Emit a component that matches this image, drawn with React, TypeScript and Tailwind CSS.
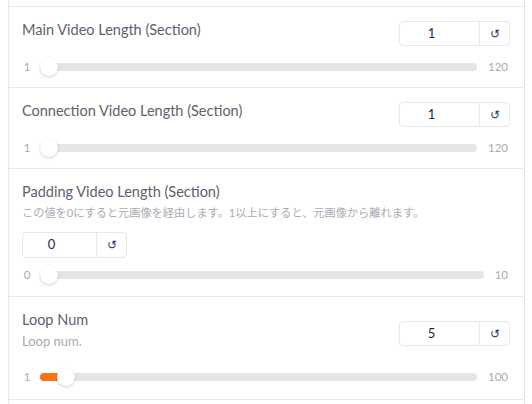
import { useState } from "react";

type SliderField = {
  label: string;
  info?: string;
  cjk?: boolean;
  value: number;
  min: number;
  max: number;
  inputLeft?: boolean;
  pb: string;
};

const fields: SliderField[] = [
  { label: "Main Video Length (Section)", value: 1, min: 1, max: 120, pb: "pb-[11px]" },
  { label: "Connection Video Length (Section)", value: 1, min: 1, max: 120, pb: "pb-[11px]" },
  {
    label: "Padding Video Length (Section)",
    info: "この値を0にすると元画像を経由します。1以上にすると、元画像から離れます。",
    cjk: true,
    value: 0,
    min: 0,
    max: 10,
    inputLeft: true,
    pb: "pb-[12px]",
  },
  { label: "Loop Num", info: "Loop num.", value: 5, min: 1, max: 100, pb: "pb-[13px]" },
];

function NumberBox({ value, width, onReset }: { value: number; width: string; onReset: () => void }) {
  return (
    <div className={`flex h-[25px] rounded-[4px] border border-[#e5e7eb] bg-white ${width}`}>
      <div className="flex flex-1 items-center justify-center pr-[16px] text-[13px] text-[#1e293b]">{value}</div>
      <button
        onClick={onReset}
        className="flex w-[30px] items-center justify-center border-l border-[#e5e7eb] text-[12px] text-[#1e3a5f]"
      >
        ↺
      </button>
    </div>
  );
}

function Track({ value, min, max }: { value: number; min: number; max: number }) {
  const pct = (value - min) / (max - min);
  return (
    <div className="relative h-[18px] flex-1">
      <div className="absolute left-0 right-0 top-[5px] h-[8px] rounded-full bg-[#e5e5e5]" />
      {value > min && (
        <div
          className="absolute left-0 top-[5px] h-[8px] rounded-full bg-[#f97316]"
          style={{ width: `calc(${pct} * (100% - 18px) + 9px)` }}
        />
      )}
      <div
        className="absolute top-0 h-[18px] w-[18px] rounded-full bg-white shadow-[0_1px_3px_rgba(0,0,0,0.18)]"
        style={{ left: `calc(${pct} * (100% - 18px))` }}
      />
    </div>
  );
}

function Field({ f }: { f: SliderField }) {
  const [value, setValue] = useState(f.value);
  const reset = () => setValue(f.value);
  return (
    <div className={`border-t border-[#e5e7eb] pl-[13px] pr-[14px] pt-[13px] ${f.pb}`}>
      <div className="flex items-start justify-between">
        <div>
          <div className="text-[14.5px] leading-[20px] text-[#5b6270]">{f.label}</div>
          {f.info && (
            <div
              className={`mt-[2px] leading-[18px] text-[#a8acb3] ${
                f.cjk ? "text-[11.2px]" : "text-[13px]"
              }`}
            >
              {f.info}
            </div>
          )}
        </div>
        {!f.inputLeft && (
          <div className={f.info ? "mt-[11px]" : "mt-[1px]"}>
            <NumberBox value={value} width="w-[111px]" onReset={reset} />
          </div>
        )}
      </div>
      {f.inputLeft && (
        <div className="mt-[10px]">
          <NumberBox value={value} width="w-[105px] h-[26px]" onReset={reset} />
        </div>
      )}
      <div
        className={`flex items-center text-[11.5px] text-[#a8acb3] ${
          f.inputLeft ? "mt-[8px]" : f.info ? "mt-[18px]" : "mt-[12px]"
        }`}
      >
        <span className="w-[10px] text-center">{f.min}</span>
        <div className="ml-[8px] flex flex-1">
          <Track value={value} min={f.min} max={f.max} />
        </div>
        <span className="ml-[11px] mr-[2px]">{f.max}</span>
      </div>
    </div>
  );
}

export default function App() {
  return (
    <div
      className="h-[404px] w-[532px] overflow-hidden bg-white"
      style={{ fontFamily: '"Lato", "Noto Sans CJK JP", sans-serif' }}
    >
      <div className="ml-[8px] w-[517px] border-x border-[#e5e7eb]">
        <div className="h-[6px]" />
        {fields.map((f) => (
          <Field key={f.label} f={f} />
        ))}
        <div className="h-[10px] border-t border-[#e5e7eb]" />
      </div>
    </div>
  );
}
